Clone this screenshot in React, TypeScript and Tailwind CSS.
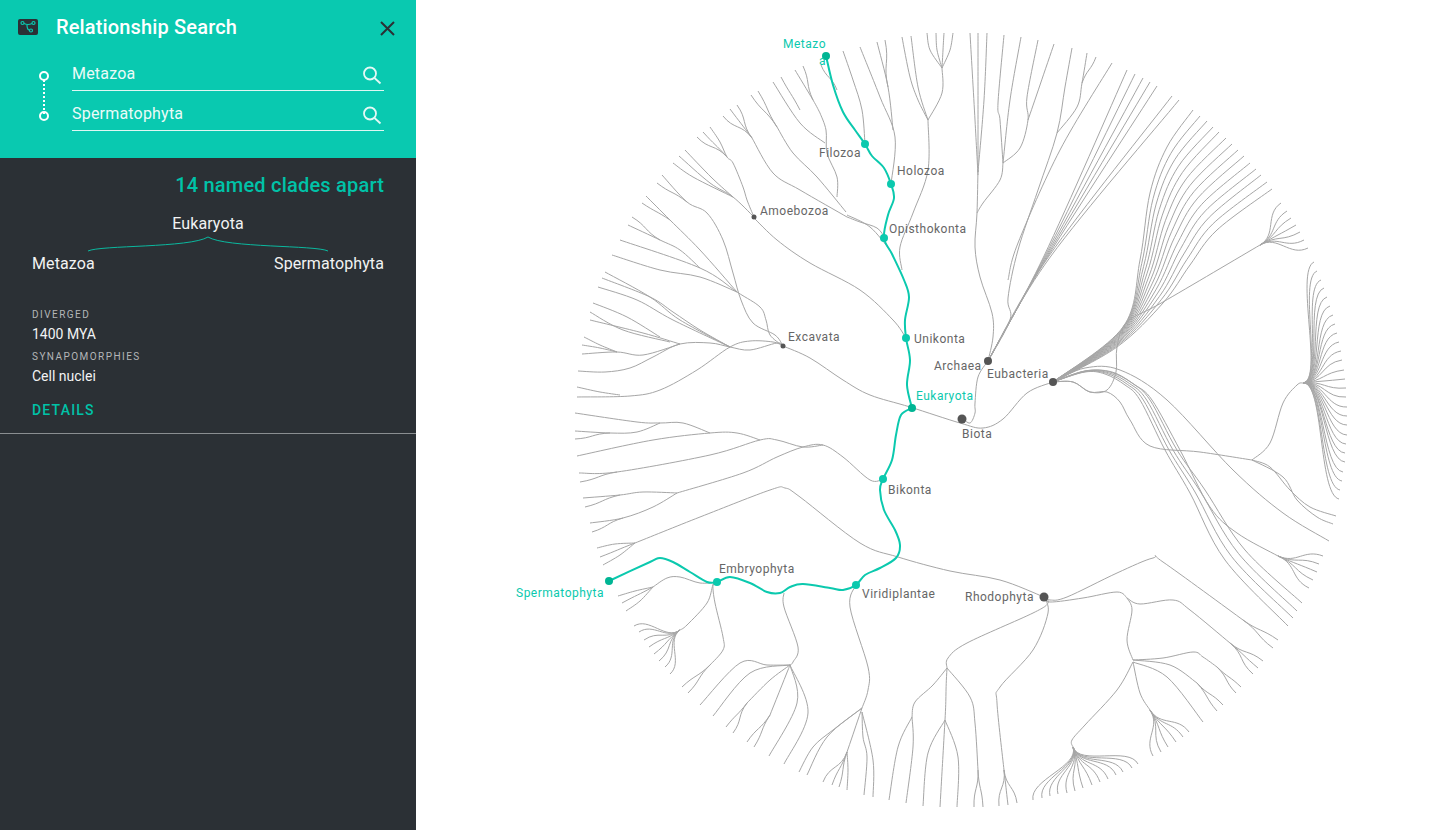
type Pt = [number, number];

const CX = 962;
const CY = 419;

// flat x,y list -> smooth path through the points
function smooth(flat: number[]) {
  const pts: Pt[] = [];
  for (let i = 0; i < flat.length; i += 2) pts.push([flat[i], flat[i + 1]]);
  let d = `M${pts[0][0]} ${pts[0][1]}`;
  for (let i = 0; i < pts.length - 1; i++) {
    const p0 = pts[i - 1] || pts[i];
    const p1 = pts[i];
    const p2 = pts[i + 1];
    const p3 = pts[i + 2] || p2;
    const c1 = [p1[0] + (p2[0] - p0[0]) / 6, p1[1] + (p2[1] - p0[1]) / 6];
    const c2 = [p2[0] - (p3[0] - p1[0]) / 6, p2[1] - (p3[1] - p1[1]) / 6];
    d += `C${c1[0].toFixed(1)} ${c1[1].toFixed(1)} ${c2[0].toFixed(1)} ${c2[1].toFixed(1)} ${p2[0]} ${p2[1]}`;
  }
  return d;
}

// radial link, same shape as the tips in the cladogram
function link(s: Pt, t: Pt) {
  const rs = Math.hypot(s[0] - CX, s[1] - CY);
  const rt = Math.hypot(t[0] - CX, t[1] - CY);
  const m = (rs + rt) / 2;
  const c1 = [CX + ((s[0] - CX) / rs) * m, CY + ((s[1] - CY) / rs) * m];
  const c2 = [CX + ((t[0] - CX) / rt) * m, CY + ((t[1] - CY) / rt) * m];
  return `M${s[0]} ${s[1]}C${c1[0].toFixed(1)} ${c1[1].toFixed(1)} ${c2[0].toFixed(1)} ${c2[1].toFixed(1)} ${t[0]} ${t[1]}`;
}

function fan(h: Pt, tips: number[]) {
  const out: string[] = [];
  for (let i = 0; i < tips.length; i += 2) out.push(link(h, [tips[i], tips[i + 1]]));
  return out;
}

// n lines blended between two polylines, the last point taken from tips
function blend(a: number[], b: number[], tips: number[]) {
  const n = tips.length / 2;
  const out: string[] = [];
  for (let i = 0; i < n; i++) {
    const t = n === 1 ? 0 : i / (n - 1);
    const line = a.map((v, k) => v + (b[k] - v) * t);
    line[line.length - 2] = tips[i * 2];
    line[line.length - 1] = tips[i * 2 + 1];
    out.push(smooth(line));
  }
  return out;
}

const rightFanTips: number[] = [];
for (let i = 0; i < 27; i++) {
  const a = ((-24 + (36 * i) / 26) * Math.PI) / 180;
  rightFanTips.push(Math.round(CX + 385 * Math.cos(a)), Math.round(CY + 385 * Math.sin(a)));
}

const stems: number[][] = [
  // root, eubacteria, archaea
  [783, 346, 810, 358, 843, 380, 870, 395, 910, 407, 960, 423, 983, 428, 1003, 419, 1027, 393, 1053, 382],
  [962, 418, 970, 423, 975, 413, 975, 403, 978, 377, 988, 361],
  // archaea upward
  [988, 361, 993, 337, 992, 313, 980, 277, 975, 247, 977, 213, 978, 170],
  [978, 175, 975, 120, 970, 33],
  [978, 172, 978, 100, 978, 33],
  [978, 172, 984, 100, 987, 33],
  [977, 213, 983, 203, 1000, 180, 1003, 163],
  [1003, 163, 1000, 120, 998, 103, 1004, 35],
  [1003, 163, 1010, 100, 1021, 37],
  [1003, 163, 1020, 148, 1028, 120, 1027, 97, 1038, 40],
  [1028, 120, 1040, 85, 1054, 44],
  [988, 361, 1010, 320, 1008, 298, 1018, 250, 1038, 190, 1057, 133, 1065, 87, 1072, 48],
  [1057, 133, 1077, 107, 1082, 83, 1087, 53],
  [1082, 83, 1096, 57],
  [1008, 280, 1018, 243, 1060, 150, 1112, 63],
  // archaea straight fan
  [988, 361, 1044, 256, 1127, 70],
  [988, 361, 1045, 256, 1135, 74],
  [988, 361, 1046, 256, 1143, 78],
  [988, 361, 1047, 256, 1150, 82],
  [988, 361, 1048, 256, 1157, 86],
  [988, 361, 1049, 256, 1172, 96],
  [988, 361, 1051, 256, 1179, 100],
  // eubacteria side branches
  [1053, 382, 1073, 382, 1090, 392, 1107, 390, 1116, 372, 1117, 347, 1127, 322, 1163, 302, 1260, 245],
  [1053, 382, 1073, 382, 1090, 392, 1107, 392, 1120, 402, 1130, 420, 1150, 446, 1200, 452, 1252, 460],
  [1252, 460, 1270, 443, 1283, 403, 1297, 385, 1303, 383],
  [1252, 460, 1270, 467, 1290, 490, 1310, 507, 1336, 516],
  [1252, 460, 1283, 477, 1297, 500, 1317, 517, 1333, 524],
  [1053, 382, 1085, 368, 1120, 370, 1167, 400, 1233, 470, 1283, 513, 1329, 541],
  [1053, 382, 1085, 371, 1112, 372, 1135, 385, 1152, 400, 1180, 450, 1210, 507, 1237, 533, 1278, 556],
  // unikonta side
  [753, 217, 777, 240, 810, 263, 860, 290, 893, 320, 906, 338],
  [733, 197, 693, 177, 673, 163],
  [754, 217, 733, 197, 710, 183, 679, 156],
  [733, 197, 712, 178, 685, 150],
  [754, 217, 747, 200, 743, 187, 733, 163, 727, 157, 720, 142, 710, 127],
  [727, 157, 703, 132],
  [727, 157, 697, 137],
  // opisthokonta side
  [885, 238, 877, 228, 860, 222, 847, 217],
  [890, 250, 870, 227, 847, 215],
  [847, 217, 800, 190, 773, 173, 752, 138],
  [752, 138, 723, 116],
  [752, 138, 730, 109],
  [752, 138, 737, 105],
  [846, 212, 817, 177, 793, 153, 777, 127],
  [777, 127, 751, 95],
  [777, 127, 758, 91],
  [837, 197, 837, 177, 827, 153, 826, 130, 820, 113],
  [825, 143, 800, 123, 773, 82],
  [800, 110, 781, 77],
  [820, 113, 813, 100, 795, 70],
  [813, 100, 803, 66],
  [837, 90, 821, 65],
  [865, 144, 862, 110, 853, 80, 843, 51],
  [891, 184, 895, 137, 880, 97, 860, 47],
  [893, 130, 888, 87, 877, 42],
  [888, 87, 885, 40],
  // holozoa side trunk
  [902, 270, 900, 247, 913, 213, 928, 170, 928, 120],
  [928, 120, 918, 100, 910, 77, 902, 37],
  [928, 120, 918, 87, 911, 36],
  [928, 120, 942, 93, 942, 68],
  [942, 68, 930, 50, 927, 33],
  [942, 68, 937, 50, 936, 33],
  [942, 68, 943, 50, 944, 33],
  [942, 68, 950, 50, 953, 33],
  // excavata side
  [783, 346, 773, 342, 750, 341, 730, 347, 697, 370, 660, 390, 630, 396, 577, 397],
  [620, 395, 600, 392, 577, 387],
  [783, 346, 777, 343, 750, 350, 730, 347, 710, 343, 680, 344, 653, 357, 630, 368, 605, 372, 578, 371],
  [680, 344, 643, 355, 617, 352, 582, 354],
  [617, 352, 600, 348, 582, 345],
  [617, 352, 600, 345, 584, 337],
  [680, 344, 643, 333, 590, 320],
  [670, 342, 623, 330, 590, 312],
  [660, 337, 627, 317, 593, 303],
  [730, 347, 680, 320, 650, 297, 605, 272],
  [730, 347, 700, 330, 673, 312, 650, 297, 602, 278],
  [730, 347, 673, 320, 637, 300, 598, 287],
  [783, 346, 775, 335, 753, 323, 741, 300, 733, 273, 723, 240, 707, 213, 687, 202, 662, 175],
  [687, 202, 657, 183],
  [783, 346, 770, 335, 766, 320, 760, 307, 737, 292, 700, 268, 620, 240],
  [737, 292, 700, 277, 660, 270, 612, 255],
  [700, 268, 680, 250, 660, 240, 628, 225],
  [660, 240, 632, 217],
  [737, 292, 700, 250, 670, 220, 646, 196],
  [670, 220, 642, 203],
  // bikonta side
  [883, 479, 870, 480, 843, 457, 823, 445, 803, 447, 777, 457, 743, 473, 677, 493],
  [677, 493, 653, 507, 623, 518, 590, 523],
  [623, 518, 592, 532],
  [677, 493, 643, 492, 620, 495, 583, 498],
  [620, 495, 585, 507],
  [823, 445, 803, 447, 777, 440, 760, 440, 710, 455, 617, 472, 579, 473],
  [617, 472, 580, 482],
  [760, 440, 737, 433, 710, 433, 653, 440, 577, 456],
  [710, 433, 683, 423, 660, 423, 637, 422, 575, 413],
  [660, 423, 637, 432, 610, 433, 575, 431],
  [610, 433, 575, 439],
  // rhodophyta trunk
  [635, 543, 700, 517, 770, 490, 785, 488, 800, 497, 860, 543, 898, 557, 950, 571, 1000, 580, 1044, 597],
  [635, 543, 615, 544, 597, 548],
  [635, 543, 600, 557],
  [635, 543, 620, 555, 603, 565],
  // embryophyta
  [717, 582, 700, 583, 680, 577, 667, 578, 653, 587],
  [653, 587, 635, 591, 618, 596],
  [653, 587, 622, 603],
  [653, 587, 640, 601, 626, 611],
  [717, 582, 713, 585, 707, 603, 687, 625, 680, 630],
  [717, 582, 713, 585, 715, 603, 723, 637, 723, 650, 710, 665],
  [710, 665, 682, 687],
  [710, 665, 688, 693],
  // after embryophyta
  [784, 593, 784, 607, 798, 647, 793, 662, 790, 665],
  [790, 665, 767, 665, 740, 663, 700, 705],
  [790, 665, 750, 673, 713, 716],
  [790, 665, 770, 680, 747, 703],
  [747, 703, 726, 727],
  [747, 703, 733, 733],
  [790, 665, 788, 670, 770, 715],
  [770, 715, 747, 742],
  [770, 715, 754, 747],
  [790, 665, 797, 703, 769, 756],
  [790, 665, 808, 713, 784, 764],
  // viridiplantae
  [856, 585, 850, 607, 868, 667, 868, 690, 862, 708],
  [862, 708, 833, 730, 813, 747, 799, 772],
  [862, 708, 827, 737, 807, 775],
  [862, 708, 847, 752],
  [847, 752, 823, 782],
  [847, 752, 832, 785],
  [847, 752, 839, 787],
  [847, 752, 848, 770, 847, 790],
  [862, 712, 863, 737, 867, 757, 864, 795],
  [862, 712, 873, 760, 873, 797],
  // rhodophyta down
  [1044, 597, 1048, 603, 1033, 613, 967, 643, 948, 658, 947, 668],
  [947, 668, 933, 685, 915, 702, 912, 717],
  [912, 717, 898, 747, 889, 800],
  [912, 717, 913, 747, 906, 803],
  [947, 668, 945, 720],
  [945, 720, 928, 753, 923, 806],
  [945, 720, 940, 807],
  [945, 720, 958, 757, 957, 807],
  [947, 668, 970, 697, 975, 723, 978, 770],
  [978, 770, 974, 807],
  [978, 770, 983, 807],
  [1044, 597, 1048, 613, 1033, 650, 1000, 687, 997, 703, 1004, 770],
  [1004, 770, 999, 806],
  [1004, 770, 1008, 805],
  [1004, 770, 1017, 803],
  // rhodophyta right
  [1044, 597, 1050, 600, 1067, 597, 1117, 573, 1153, 558, 1163, 562, 1243, 620],
  [1243, 620, 1278, 640],
  [1243, 620, 1273, 648],
  [1044, 597, 1050, 602, 1083, 598, 1117, 592, 1127, 598],
  [1127, 598, 1140, 604, 1173, 600, 1190, 610, 1230, 643],
  [1230, 643, 1263, 661],
  [1230, 643, 1258, 668],
  [1230, 643, 1253, 674],
  [1127, 598, 1132, 610, 1127, 640, 1133, 660],
  [1133, 660, 1163, 658, 1193, 652, 1203, 657, 1217, 667],
  [1217, 667, 1241, 687],
  [1217, 667, 1236, 693],
  [1133, 660, 1170, 665, 1197, 683],
  [1197, 683, 1223, 705],
  [1197, 683, 1217, 711],
  [1133, 662, 1167, 677, 1203, 722],
  [1133, 662, 1140, 693, 1150, 710],
  [1133, 662, 1117, 690, 1085, 725, 1072, 740, 1073, 747],
];

const grayPaths: string[] = [
  ...stems.map((s) => (s.length === 4 ? link([s[0], s[1]], [s[2], s[3]]) : smooth(s))),
  ...blend(
    [1053, 382, 1123, 327, 1140, 260, 1150, 193, 1167, 147, 1193, 110],
    [1053, 382, 1117, 347, 1163, 303, 1190, 265, 1217, 230, 1272, 189],
    [1193, 110, 1200, 116, 1207, 121, 1213, 127, 1219, 132, 1226, 138, 1232, 144, 1238, 150, 1244, 156, 1250, 163, 1256, 169, 1261, 175, 1267, 182, 1272, 189],
  ),
  ...blend(
    [1053, 382, 1085, 372, 1105, 374, 1125, 385, 1140, 400, 1165, 450, 1190, 493, 1225, 560, 1288, 626],
    [1053, 382, 1085, 371, 1110, 372, 1132, 383, 1150, 400, 1177, 450, 1205, 490, 1245, 550, 1302, 603],
    [1288, 626, 1293, 618, 1297, 611, 1302, 603],
  ),
  ...fan([1260, 245], [1281, 203, 1287, 211, 1291, 218, 1296, 225, 1300, 232, 1304, 240, 1308, 248]),
  ...fan([1303, 383], rightFanTips),
  ...fan([1278, 556], [1323, 556, 1319, 564, 1317, 572, 1313, 580, 1309, 588]),
  ...fan([1150, 710], [1189, 732, 1183, 737, 1176, 742, 1168, 747, 1161, 752, 1153, 756]),
  ...fan([1073, 747], [1033, 800, 1042, 798, 1050, 796, 1058, 794, 1067, 793, 1075, 791, 1083, 788, 1092, 785, 1100, 782, 1108, 779, 1116, 775, 1123, 772, 1132, 768, 1138, 764]),
  ...fan([680, 630], [634, 626, 639, 632, 644, 640, 649, 647, 654, 654, 659, 661, 665, 667, 670, 674]),
];

const greenPath = [
  [826, 56, 833, 85, 843, 112, 855, 130, 865, 144, 872, 156, 884, 168, 891, 184, 894, 198, 888, 215, 884, 238, 892, 254, 904, 280, 909, 297, 905, 320, 906, 338, 910, 360, 907, 385, 912, 408],
  [912, 408, 901, 415, 896, 435, 892, 460, 883, 479, 880, 490, 884, 510, 895, 530, 900, 545, 896, 558, 880, 568, 865, 575, 856, 585, 843, 590, 830, 588, 803, 584, 790, 587, 780, 593, 767, 592, 750, 583, 730, 577, 717, 582, 707, 582, 690, 572, 673, 562, 660, 558, 650, 562, 609, 581],
];

const greenDots: [number, number, string][] = [
  [826, 56, "#00b594"],
  [865, 144, "#0bc9ae"],
  [891, 184, "#0bc9ae"],
  [884, 238, "#0bc9ae"],
  [906, 338, "#0bc9ae"],
  [912, 408, "#00b594"],
  [883, 479, "#0bc9ae"],
  [856, 585, "#0bc9ae"],
  [717, 582, "#0bc9ae"],
  [609, 581, "#00b594"],
];

const grayDots: [number, number, number][] = [
  [962, 419, 4.5],
  [988, 361, 4],
  [1053, 382, 4],
  [1044, 597, 4.5],
  [754, 217, 2.5],
  [783, 346, 2.5],
];

const labels: [string, number, number, boolean?][] = [
  ["Filozoa", 819, 157],
  ["Holozoa", 897, 175],
  ["Opisthokonta", 889, 233],
  ["Amoebozoa", 760, 215],
  ["Unikonta", 914, 343],
  ["Excavata", 788, 341],
  ["Archaea", 934, 370],
  ["Eubacteria", 987, 378],
  ["Biota", 962, 438],
  ["Bikonta", 888, 494],
  ["Embryophyta", 719, 573],
  ["Viridiplantae", 862, 598],
  ["Rhodophyta", 965, 601],
  ["Eukaryota", 916, 400, true],
  ["Spermatophyta", 516, 597, true],
  ["Metazo", 783, 48, true],
  ["a", 819, 65, true],
];

function SearchIcon() {
  return (
    <svg width="20" height="20" viewBox="0 0 20 20" fill="none" stroke="#e4f9f5" strokeWidth="1.8" className="mt-[2px] shrink-0">
      <circle cx="8" cy="8.5" r="6" />
      <path d="M12.5 13l6 5.5" />
    </svg>
  );
}

function SearchField({ value }: { value: string }) {
  return (
    <div className="flex h-[40px] items-center justify-between border-b border-[#dff7f3] pt-[6px] pr-[2px]">
      <span className="text-[16px] tracking-[0.2px] text-[#ecfbf8]">{value}</span>
      <SearchIcon />
    </div>
  );
}

function Cladogram() {
  return (
    <svg viewBox="416 0 1025 830" className="h-[830px] w-[1025px]" fill="none">
      {grayPaths.map((d, i) => (
        <path key={i} d={d} stroke="#a6a6a6" strokeWidth="1" />
      ))}
      {greenPath.map((p, i) => (
        <path key={i} d={smooth(p)} stroke="#0bc9ae" strokeWidth="2" />
      ))}
      {grayDots.map(([x, y, r]) => (
        <circle key={x} cx={x} cy={y} r={r} fill="#555555" />
      ))}
      {greenDots.map(([x, y, c]) => (
        <circle key={x} cx={x} cy={y} r="4" fill={c} />
      ))}
      {labels.map(([t, x, y, on]) => (
        <text key={t} x={x} y={y} fill={on ? "#0bc9ae" : "#666666"} className="text-[12px] tracking-[0.5px]">
          {t}
        </text>
      ))}
    </svg>
  );
}

export default function App() {
  return (
    <div className="flex h-screen w-screen overflow-hidden bg-white font-['Roboto',sans-serif]">
      <aside className="flex h-full w-[416px] shrink-0 flex-col bg-[#2b3035]">
        <header className="h-[158px] bg-[#09c9b0] pt-[12px] pr-[21px] pl-[18px]">
          <div className="flex h-[30px] items-center">
            <svg width="20" height="16" viewBox="0 0 20 16" className="shrink-0" fill="none">
              <rect width="20" height="16" rx="2" fill="#2b3035" />
              <g stroke="#09c9b0" strokeWidth="1.2">
                <circle cx="4.5" cy="4" r="1.5" />
                <circle cx="15.5" cy="4" r="1.5" />
                <circle cx="13" cy="11.5" r="1.5" />
                <path d="M6 4.5c3 1.5 5 1.5 8 0M9 6c0 3 1 5 2.6 5.2" />
              </g>
            </svg>
            <h1 className="ml-[18px] flex-1 text-[20px] font-medium tracking-[0.15px] text-white">Relationship Search</h1>
            <svg width="16" height="16" viewBox="0 0 16 16" stroke="#2b3035" strokeWidth="2" className="mt-[2px]">
              <path d="M2 2l13 13M15 2L2 15" />
            </svg>
          </div>
          <div className="mt-[9px] mr-[11px] flex">
            <svg width="12" height="64" viewBox="0 0 12 64" fill="none" stroke="white" className="mt-[17px] ml-[20px] shrink-0">
              <circle cx="6" cy="8" r="4" strokeWidth="2" />
              <path d="M6 12v36" strokeWidth="2" strokeDasharray="2 2" />
              <circle cx="6" cy="48" r="4" strokeWidth="2" />
            </svg>
            <div className="ml-[22px] flex-1">
              <SearchField value="Metazoa" />
              <SearchField value="Spermatophyta" />
            </div>
          </div>
        </header>

        <section className="border-b border-[#8a8e91] px-[32px] pt-[15px] pb-[13px] text-[#f2f3f3]">
          <p className="text-right text-[20px] leading-[24px] font-medium tracking-[0.2px] text-[#00c2a8]">14 named clades apart</p>
          <p className="mt-[15px] text-center text-[16px] leading-[24px] tracking-[0.1px]">Eukaryota</p>
          <svg width="352" height="16" viewBox="0 0 352 16" fill="none" stroke="#0bb89f" className="block">
            <path d="M56 15C68 9 158 12 176 1C194 12 284 9 296 15" />
          </svg>
          <div className="flex justify-between text-[16px] leading-[24px] tracking-[0.1px]">
            <span>Metazoa</span>
            <span>Spermatophyta</span>
          </div>
          <p className="mt-[33px] text-[10px] leading-[12px] tracking-[1.45px] text-[#b4b6b8]">DIVERGED</p>
          <p className="mt-[3px] text-[14px] leading-[20px]">1400 MYA</p>
          <p className="mt-[7px] text-[10px] leading-[12px] tracking-[1.45px] text-[#b4b6b8]">SYNAPOMORPHIES</p>
          <p className="mt-[3px] text-[14px] leading-[20px]">Cell nuclei</p>
          <p className="mt-[14px] text-[14px] leading-[20px] font-medium tracking-[1.2px] text-[#00c2a8]">DETAILS</p>
        </section>
      </aside>
      <main className="min-w-0 flex-1">
        <Cladogram />
      </main>
    </div>
  );
}
